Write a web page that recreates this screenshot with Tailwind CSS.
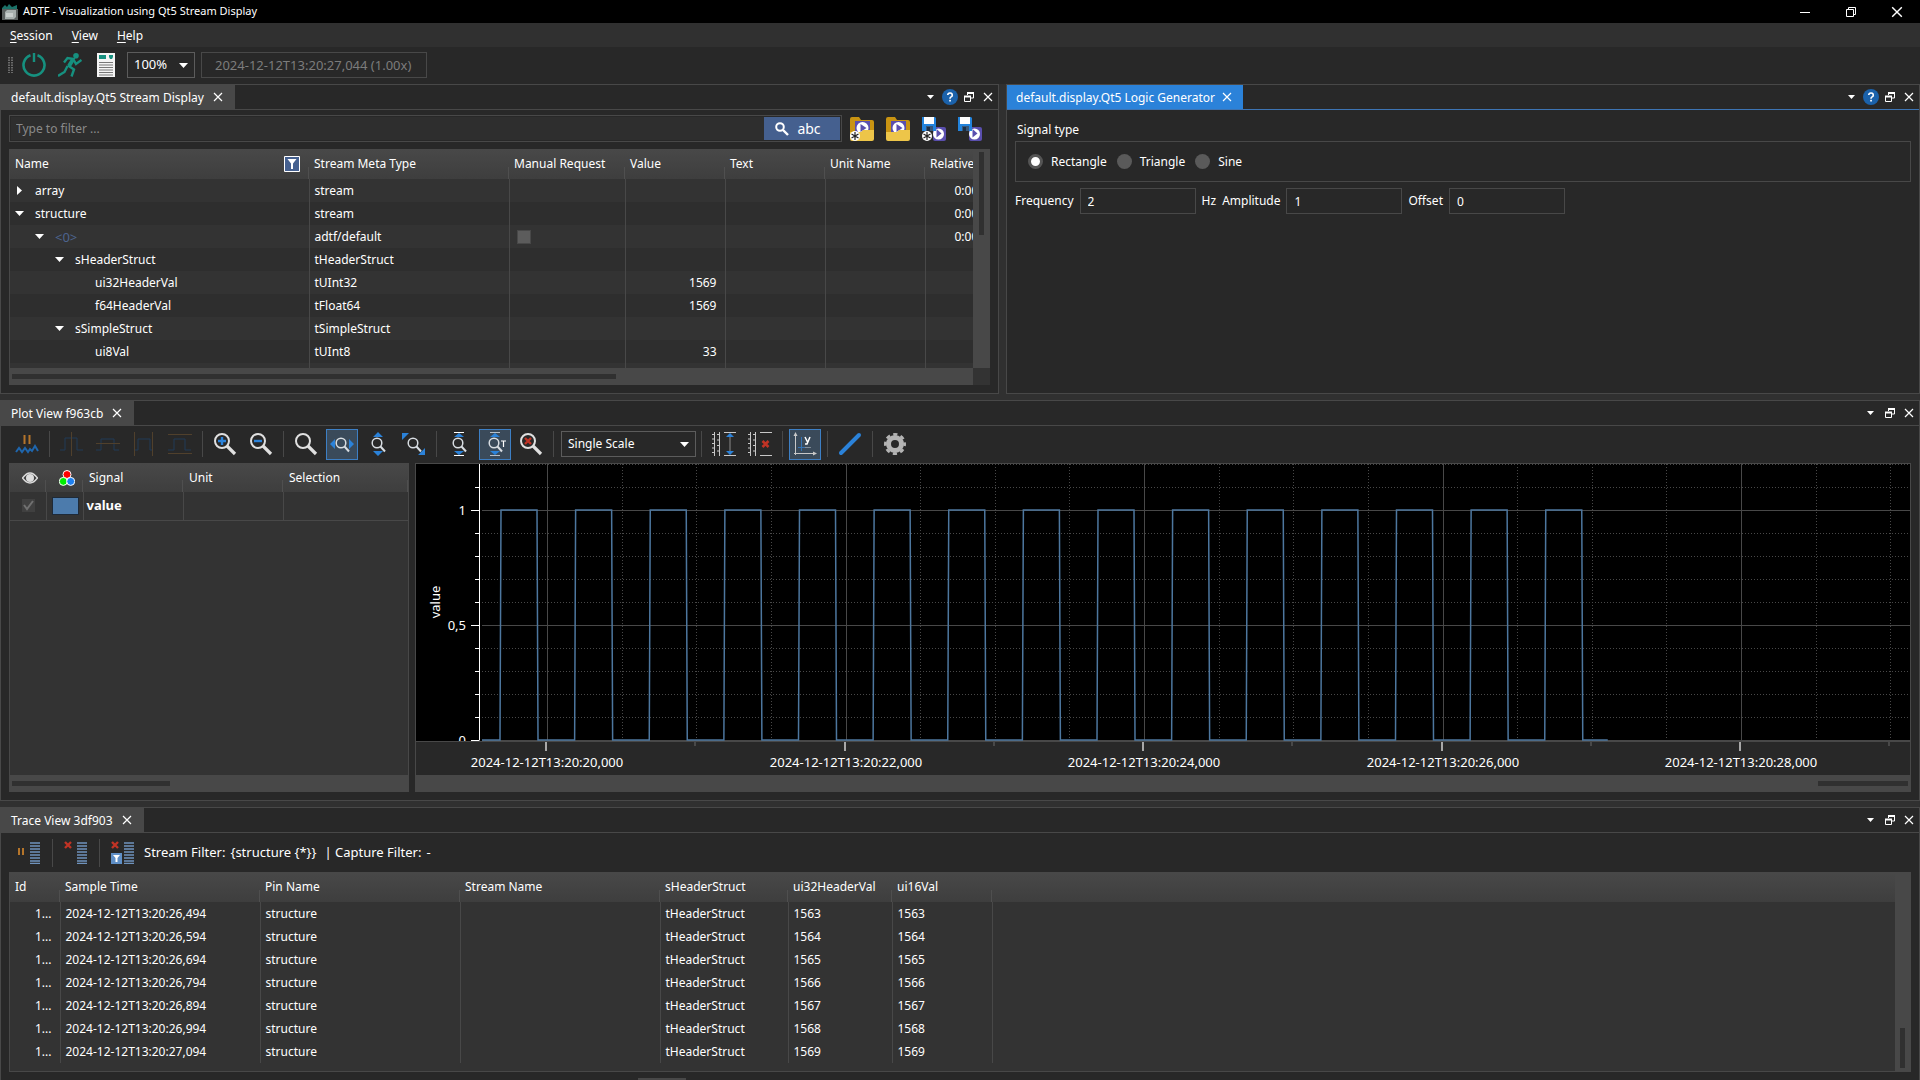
<!DOCTYPE html>
<html lang="en">
<head>
    <meta charset="utf-8"/>
    <meta content="width=device-width, initial-scale=1.0" name="viewport"/>
    <title>ADTF - Visualization using Qt5 Stream Display</title>
    <script src="https://cdn.jsdelivr.net/npm/@tailwindcss/browser@4"></script>
    <style>
        body {
            font-family: 'Noto Sans', 'Open Sans', sans-serif;
        }
    </style>
</head>
<body class="bg-[#303030] text-white text-xs h-screen flex flex-col overflow-hidden">
    <!-- shared icons -->
    <svg class="hidden">
        <symbol id="close" viewBox="0 0 10 10"><path d="M1 1l8 8M9 1l-8 8" stroke="#fff" stroke-width="1.2" fill="none"/></symbol>
        <symbol id="arrow" viewBox="0 0 9 5"><path d="M0 0h9L4.500 5z" fill="#fff"/></symbol>
        <symbol id="float" viewBox="0 0 10 10"><path d="M3.500 3V1h6v5H7" stroke="#fff" fill="none"/><path d="M3 1h7" stroke="#fff" stroke-width="2"/><path d="M.5 4.500h6v5h-6z" stroke="#fff" fill="none"/><path d="M0 4.500h7" stroke="#fff" stroke-width="2"/></symbol>
        <symbol id="help" viewBox="0 0 16 16"><circle cx="8" cy="8" r="8" fill="#1b62ab"/><path d="M5.700 6a2.300 2.100 0 1 1 3.400 1.900C8.200 8.400 8 8.800 8 9.800" stroke="#fff" stroke-width="1.600" fill="none"/><rect x="7.200" y="10.800" width="1.700" height="1.700" fill="#fff"/></symbol>
        <symbol id="lens" viewBox="0 0 24 24"><circle cx="9" cy="9" r="7" stroke="#e0e0e0" stroke-width="2" fill="none"/><path d="M14 14l8 8" stroke="#e0e0e0" stroke-width="3.200"/></symbol>
        <symbol id="lens-sm" viewBox="0 0 24 24"><circle cx="11" cy="11" r="4.800" stroke="#d8dde2" stroke-width="1.500" fill="none"/><path d="M14.500 14.500l4.500 5" stroke="#d8dde2" stroke-width="2"/></symbol>
        <symbol id="rows" viewBox="0 0 10 22"><path d="M0 1h10M0 4h10M0 7h10M0 10h10M0 13h10M0 16h10M0 19h10M0 21.500h10" stroke="#6f93bd" stroke-width="1.300"/></symbol>
        <symbol id="cross" viewBox="0 0 8 8"><path d="M1 1l6 6M7 1l-6 6" stroke="#c03325" stroke-width="2.400"/></symbol>
        <symbol id="floppy" viewBox="0 0 24 24"><rect x="11" y="10" width="13" height="14" rx="2" fill="#5a4fae"/><circle cx="16.500" cy="17" r="5.500" fill="#fff"/><path d="M14.500 12v8.500l5-4z" fill="#5a4fae"/><path d="M0 0h13l1 1v13H0z" fill="#2283dc"/><path d="M2 0h10v7H2z" fill="#fff"/><path d="M4 9h7v5H4z" fill="#37577a"/><path d="M5 10h3v4H5z" fill="#1c2f45"/></symbol>
        <symbol id="folder" viewBox="0 0 24 24"><path d="M2 0h7l2 3h11a2 2 0 0 1 2 2v10H0V2a2 2 0 0 1 2-2z" fill="#c99412"/><rect x="5" y="4" width="15" height="14" fill="#5a4fae"/><circle cx="12.500" cy="11" r="6" fill="#fff"/><path d="M10.500 7v8l6-4z" fill="#5a4fae"/><path d="M0 15h11l2-2h11v9a2 2 0 0 1-2 2H2a2 2 0 0 1-2-2z" fill="#edc549"/></symbol>
        <symbol id="star" viewBox="0 0 24 24"><circle cx="5" cy="19" r="5" fill="#fff"/><path d="M5 15v8M1.500 17l7 4M8.500 17l-7 4" stroke="#222" stroke-width="1.200"/></symbol>
    </svg>

    <header class="bg-black h-[23px] shrink-0 flex items-center justify-between">
        <div class="flex items-center">
            <svg class="w-4 h-4 mx-[2px]" viewBox="0 0 16 16"><path d="M0 4l3-3 2 2 2-3 3 3 5-2v5H0z" fill="#1b7268"/><path d="M0 5h16v11H0z" fill="#5a5f5e"/><path d="M3 8l2-2h9v7l-2 2H3z" fill="#a8b0ae"/><path d="M4 10h7M4 12h7" stroke="#e8ecea"/></svg>
            <h1 class="ml-[3px] text-[11px]">ADTF - Visualization using Qt5 Stream Display</h1>
        </div>
        <div class="flex">
            <button class="w-[46px] h-5 flex items-center justify-center" aria-label="Minimize"><svg class="w-[10px] h-[10px]" viewBox="0 0 10 10"><path d="M0 5.500h10" stroke="#fff"/></svg></button>
            <button class="w-[46px] h-5 flex items-center justify-center" aria-label="Restore"><svg class="w-[10px] h-[10px]" viewBox="0 0 10 10"><path d="M.5 2.500h7v7h-7zM2.500 2V.5h7v7H8" stroke="#fff" fill="none"/></svg></button>
            <button class="w-[46px] h-5 flex items-center justify-center" aria-label="Close"><svg class="w-3 h-3"><use href="#close"/></svg></button>
        </div>
    </header>

    <nav class="h-6 shrink-0 flex items-center gap-[19px] px-[10px] pt-px">
        <a href="#"><span class="underline underline-offset-2">S</span>ession</a>
        <a href="#"><span class="underline underline-offset-2">V</span>iew</a>
        <a href="#"><span class="underline underline-offset-2">H</span>elp</a>
    </nav>

    <div class="h-[37px] shrink-0 bg-[#282828] flex items-center pl-2 pb-[2px]">
        <svg class="w-[5px] h-4" viewBox="0 0 5 16"><path d="M1 0v16M4 0v16" stroke="#6a6a6a" stroke-width="2" stroke-dasharray="1.500 1"/></svg>
        <button class="ml-[9px] w-6" aria-label="Power"><svg class="w-6 h-6" viewBox="0 0 24 24"><path d="M8.500 2.200a10.500 10.500 0 1 0 7 0" stroke="#16907f" stroke-width="2.600" fill="none"/><path d="M12 0v9" stroke="#16907f" stroke-width="2.400"/></svg></button>
        <button class="ml-3 w-6" aria-label="Run"><svg class="w-6 h-6" viewBox="0 0 24 24" fill="none" stroke="#16907f" stroke-width="2.400"><circle cx="18" cy="2.800" r="2.800" fill="#16907f" stroke="none"/><path d="M6 9.500l3.500-4.500 6 1-5 7.500"/><path d="M15 6.500L11 13" stroke-width="4"/><path d="M10 12.500l6 4-2.500 7"/><path d="M9.500 13l-3 6L0 23"/><path d="M15.500 6.500l2.500 4.500 5.500-4"/></svg></button>
        <button class="ml-[15px] w-[18px]" aria-label="Log"><svg class="w-[18px] h-6" viewBox="0 0 18 24"><path d="M0 0h18v24H0z" fill="#f4f4f4"/><path d="M2 2h7v4H2zM12 2h4v2l-1 2h-2l-1-2z" fill="#16907f"/><path d="M2 9.500h14M2 12h14M2 14.500h14M2 17h14M2 19.500h14M2 22h14" stroke="#777"/></svg></button>
        <div class="relative ml-3">
            <select class="appearance-none bg-transparent border border-[#5c5c5c] w-[68px] h-[26px] pl-[6px] text-[13px] text-white" aria-label="Playback speed"><option>100%</option></select>
            <svg class="absolute right-[7px] top-[11px] w-[9px] h-[5px] pointer-events-none"><use href="#arrow"/></svg>
        </div>
        <input class="ml-[6px] w-[226px] h-[26px] border border-[#484848] px-[13px] text-[13px] text-[#7c7c7c]" type="text" value="2024-12-12T13:20:27,044 (1.00x)" aria-label="Session time" readonly>
    </div>

    <main class="flex-1 min-h-0 grid grid-rows-[310fr_401fr_273fr] gap-[6px]">
        <div class="min-h-0 grid grid-cols-[999fr_914fr] gap-[7px]">
            <!-- stream display -->
            <section class="min-w-0 min-h-0 border border-[#484848] bg-[#282828] flex flex-col">
                <div class="h-[25px] shrink-0 border-b border-[#484848] flex justify-between">
                    <div class="bg-[#484848] flex items-center pl-[10px] pr-3 gap-[9px]">
                        <h2 class="pt-px">default.display.Qt5 Stream Display</h2>
                        <button aria-label="Close tab"><svg class="w-[10px] h-[10px]"><use href="#close"/></svg></button>
                    </div>
                    <div class="flex items-center pr-px">
                        <button class="w-[19px] flex justify-center" aria-label="Menu"><svg class="w-[7px] h-1"><use href="#arrow"/></svg></button>
                        <button class="w-[19px] flex justify-center" aria-label="Help"><svg class="w-4 h-4"><use href="#help"/></svg></button>
                        <button class="w-[19px] flex justify-center" aria-label="Float"><svg class="w-[10px] h-[10px]"><use href="#float"/></svg></button>
                        <button class="w-[19px] flex justify-center" aria-label="Close"><svg class="w-[10px] h-[10px]"><use href="#close"/></svg></button>
                    </div>
                </div>
                <div class="flex-1 min-h-0 flex flex-col gap-[7px] px-2 pt-[5px] pb-2">
                    <div class="flex items-center pr-2">
                        <div class="flex-1 flex border border-[#484848] h-[27px] p-px">
                            <input class="flex-1 bg-[#2e2e2e] px-[5px] placeholder:text-[#8a8a8a]" type="text" placeholder="Type to filter ..." aria-label="Filter">
                            <button class="w-[76px] bg-[#45608f] flex items-center justify-center gap-2 pr-2 text-sm">
                                <svg class="w-[14px] h-[14px]" viewBox="0 0 14 14"><circle cx="5" cy="5" r="3.800" stroke="#fff" stroke-width="2" fill="none"/><path d="M8 8l5 5" stroke="#fff" stroke-width="2.400"/></svg>
                                abc
                            </button>
                        </div>
                        <div class="flex gap-3 pl-2">
                            <button aria-label="Open and add"><svg class="w-6 h-6"><use href="#folder"/><use href="#star"/></svg></button>
                            <button aria-label="Open"><svg class="w-6 h-6"><use href="#folder"/></svg></button>
                            <button aria-label="Save all"><svg class="w-6 h-6"><use href="#floppy"/><use href="#star"/></svg></button>
                            <button aria-label="Save"><svg class="w-6 h-6"><use href="#floppy"/></svg></button>
                        </div>
                    </div>
                    <div class="flex-1 min-h-0 flex">
                        <div class="flex-1 min-w-0 flex flex-col">
                            <div class="flex-1 min-h-0 overflow-hidden bg-[#333333] border-t border-l border-[#484848]">
                                <table class="table-fixed w-[1060px]">
                                    <colgroup><col class="w-[299px]"><col class="w-[200px]"><col class="w-[116px]"><col class="w-[100px]"><col class="w-[100px]"><col class="w-[100px]"><col></colgroup>
                                    <thead>
                                        <tr class="h-[29px] bg-linear-to-b from-[#484848] to-[#3e3e3e] text-left [&>th]:font-normal [&>th]:px-[5px] [&>th]:pb-[2px] [&>th]:bg-[linear-gradient(#4f4f4f,#4f4f4f)] [&>th]:bg-[length:1px_12px] [&>th]:bg-right-bottom [&>th]:bg-no-repeat">
                                            <th>
                                                <div class="flex items-center justify-between pr-1">Name
                                                    <button aria-label="Filter names"><svg class="w-4 h-4" viewBox="0 0 16 16"><path d="M.5.5h15v15H.5z" fill="#45608f" stroke="#fff"/><path d="M3.500 3h9L9 7.500V13H7V7.500z" fill="#fff"/></svg></button>
                                                </div>
                                            </th>
                                            <th>Stream Meta Type</th><th>Manual Request</th><th>Value</th><th>Text</th><th>Unit Name</th><th>Relative Time</th>
                                        </tr>
                                    </thead>
                                    <tbody id="streamRows"></tbody>
                                </table>
                            </div>
                            <div class="h-[17px] bg-[#484848] px-[3px] py-[6px]"><div class="h-[5px] w-[63%] bg-[#303030]"></div></div>
                        </div>
                        <div class="w-[17px] flex flex-col">
                            <div class="flex-1 bg-[#484848] px-[6px] py-[3px]"><div class="w-[5px] h-[83px] bg-[#303030]"></div></div>
                            <div class="h-[17px] bg-[#333333]"></div>
                        </div>
                    </div>
                </div>
            </section>

            <!-- logic generator -->
            <section class="min-w-0 min-h-0 border border-[#484848] bg-[#282828]">
                <div class="h-[25px] border-b border-[#3d74b3] flex justify-between">
                    <div class="bg-[#2b82d9] flex items-center pl-[9px] pr-[11px] gap-[7px]">
                        <h2 class="pt-px">default.display.Qt5 Logic Generator</h2>
                        <button aria-label="Close tab"><svg class="w-[10px] h-[10px]"><use href="#close"/></svg></button>
                    </div>
                    <div class="flex items-center pr-px">
                        <button class="w-[19px] flex justify-center" aria-label="Menu"><svg class="w-[7px] h-1"><use href="#arrow"/></svg></button>
                        <button class="w-[19px] flex justify-center" aria-label="Help"><svg class="w-4 h-4"><use href="#help"/></svg></button>
                        <button class="w-[19px] flex justify-center" aria-label="Float"><svg class="w-[10px] h-[10px]"><use href="#float"/></svg></button>
                        <button class="w-[19px] flex justify-center" aria-label="Close"><svg class="w-[10px] h-[10px]"><use href="#close"/></svg></button>
                    </div>
                </div>
                <form class="px-2 pt-3">
                    <p class="pl-[2px] leading-4">Signal type</p>
                    <div class="mt-[3px] h-[41px] border border-[#484848] flex items-center gap-[10px] pl-3">
                        <label class="flex items-center gap-2"><input class="appearance-none w-[15px] h-[15px] rounded-full bg-[#5a5a5a] checked:bg-white checked:border-3 checked:border-[#555555]" type="radio" name="signal" checked>Rectangle</label>
                        <label class="flex items-center gap-2"><input class="appearance-none w-[15px] h-[15px] rounded-full bg-[#5a5a5a] checked:bg-white checked:border-3 checked:border-[#555555]" type="radio" name="signal">Triangle</label>
                        <label class="flex items-center gap-2"><input class="appearance-none w-[15px] h-[15px] rounded-full bg-[#5a5a5a] checked:bg-white checked:border-3 checked:border-[#555555]" type="radio" name="signal">Sine</label>
                    </div>
                    <div class="mt-[6px] flex items-center gap-[6px]">
                        <label for="frequency">Frequency</label>
                        <input class="w-[116px] h-[26px] border border-[#484848] px-[7px]" id="frequency" type="text" value="2">
                        <span>Hz</span>
                        <label for="amplitude">Amplitude</label>
                        <input class="w-[116px] h-[26px] border border-[#484848] px-[7px]" id="amplitude" type="text" value="1">
                        <label for="offset">Offset</label>
                        <input class="w-[116px] h-[26px] border border-[#484848] px-[7px]" id="offset" type="text" value="0">
                    </div>
                </form>
            </section>
        </div>

        <!-- plot view -->
        <section class="min-h-0 border border-[#484848] bg-[#282828] flex flex-col">
            <div class="h-[25px] shrink-0 border-b border-[#484848] flex justify-between">
                <div class="bg-[#484848] flex items-center pl-[10px] pr-3 gap-[9px]">
                    <h2 class="pt-px">Plot View f963cb</h2>
                    <button aria-label="Close tab"><svg class="w-[10px] h-[10px]"><use href="#close"/></svg></button>
                </div>
                <div class="flex items-center pr-px">
                    <button class="w-[19px] flex justify-center" aria-label="Menu"><svg class="w-[7px] h-1"><use href="#arrow"/></svg></button>
                    <button class="w-[19px] flex justify-center" aria-label="Float"><svg class="w-[10px] h-[10px]"><use href="#float"/></svg></button>
                    <button class="w-[19px] flex justify-center" aria-label="Close"><svg class="w-[10px] h-[10px]"><use href="#close"/></svg></button>
                </div>
            </div>
            <div class="h-[37px] shrink-0 flex items-center px-2 pb-px [&>button]:w-9 [&>button]:flex [&>button]:justify-center">
                <button aria-label="Pause"><svg class="w-6 h-6" viewBox="0 0 24 24"><path d="M9.500 3v9M14.500 3v9" stroke="#b5752a" stroke-width="2"/><path d="M1 20l3-4 3 4 3-4 3 4 2-3 2 2 3-5 3 5" stroke="#1f66ad" stroke-width="2" fill="none"/></svg></button>
                <div class="w-[9px] flex justify-center"><div class="w-px h-[26px] bg-[#484848]"></div></div>
                <button aria-label="Vertical cursor" disabled><svg class="w-6 h-6" viewBox="0 0 24 24" fill="none"><path d="M0 18h5V6h12v12h6" stroke="#203a57"/><path d="M11.500 0v24" stroke="#50402c"/></svg></button>
                <button aria-label="Horizontal cursor" disabled><svg class="w-6 h-6" viewBox="0 0 24 24" fill="none"><path d="M0 18h5V7h13v11h5" stroke="#203a57"/><path d="M0 11.500h24" stroke="#50402c"/></svg></button>
                <button aria-label="Vertical range" disabled><svg class="w-6 h-6" viewBox="0 0 24 24" fill="none"><path d="M2 18h4V7h12v11h3" stroke="#203a57"/><path d="M2.500 0v24M20.500 0v24" stroke="#50402c"/></svg></button>
                <button aria-label="Horizontal range" disabled><svg class="w-6 h-6" viewBox="0 0 24 24" fill="none"><path d="M0 18h6V7h11v11h6" stroke="#203a57"/><path d="M0 2.500h24M0 21.500h24" stroke="#50402c"/></svg></button>
                <div class="w-[9px] flex justify-center"><div class="w-px h-[26px] bg-[#484848]"></div></div>
                <button aria-label="Zoom in"><svg class="w-6 h-6" viewBox="0 0 24 24"><use href="#lens"/><path d="M5 9h8M9 5v8" stroke="#2b82d9" stroke-width="2.400"/></svg></button>
                <button aria-label="Zoom out"><svg class="w-6 h-6" viewBox="0 0 24 24"><use href="#lens"/><path d="M5 9h8" stroke="#2b82d9" stroke-width="2.400"/></svg></button>
                <div class="w-[9px] flex justify-center"><div class="w-px h-[26px] bg-[#484848]"></div></div>
                <button aria-label="Zoom"><svg class="w-6 h-6"><use href="#lens"/></svg></button>
                <button class="h-[31px] items-center border border-[#3d7fc4] bg-[#3a4a5a] mx-[2px] max-w-8" aria-label="Fit horizontally"><svg class="w-6 h-6 shrink-0" viewBox="0 0 24 24"><use href="#lens-sm"/><path d="M5 7v10l-5-5zM19 7v10l5-5z" fill="#2b82d9"/></svg></button>
                <button aria-label="Fit vertically"><svg class="w-6 h-6" viewBox="0 0 24 24"><use href="#lens-sm"/><path d="M7 5h10l-5-5zM7 19h10l-5 5z" fill="#2b82d9"/></svg></button>
                <button aria-label="Fit both"><svg class="w-6 h-6" viewBox="0 0 24 24"><use href="#lens-sm"/><path d="M0 1h7L0 8zM23 16v7h-7z" fill="#2b82d9"/></svg></button>
                <div class="w-[9px] flex justify-center"><div class="w-px h-[26px] bg-[#484848]"></div></div>
                <button aria-label="Auto fit"><svg class="w-6 h-6" viewBox="0 0 24 24"><use href="#lens-sm"/><path d="M7 5h10l-5-4zM7 19h10l-5 4z" fill="#2b82d9"/><path d="M7 .5h10M7 23.500h10" stroke="#fff"/></svg></button>
                <button class="h-[31px] items-center border border-[#3d7fc4] bg-[#3a4a5a] mx-[2px] max-w-8" aria-label="Auto fit over time"><svg class="w-6 h-6 shrink-0" viewBox="0 0 24 24"><use href="#lens-sm"/><path d="M7 5h10l-5-4zM7 19h10l-5 4z" fill="#2b82d9"/><path d="M7 .5h10M7 23.500h10" stroke="#b9c0c8"/><path d="M18 9h5M20.500 9v6" stroke="#fff" stroke-width="1.200"/></svg></button>
                <button aria-label="Reset zoom"><svg class="w-6 h-6" viewBox="0 0 24 24"><use href="#lens"/><path d="M6 6l6 6M12 6l-6 6" stroke="#c03325" stroke-width="2.400"/></svg></button>
                <div class="w-[9px] flex justify-center"><div class="w-px h-[26px] bg-[#484848]"></div></div>
                <div class="relative ml-[3px] mr-px">
                    <select class="appearance-none bg-transparent border border-[#5c5c5c] w-[135px] h-[26px] pl-[6px] text-white" aria-label="Scale mode"><option>Single Scale</option></select>
                    <svg class="absolute right-[7px] top-[11px] w-[9px] h-[5px] pointer-events-none"><use href="#arrow"/></svg>
                </div>
                <div class="w-[9px] flex justify-center"><div class="w-px h-[26px] bg-[#484848]"></div></div>
                <button aria-label="Synchronize scales"><svg class="w-6 h-6" viewBox="0 0 24 24" fill="none"><path d="M2.500 0v24M7.500 0v24M0 2.500h2M0 7h2M0 11.500h2M0 16h2M0 20.500h2M5 2.500h2M5 8h2M5 13.500h2M5 19h2M12 .5h12M12 23.500h12" stroke="#c8c8c8"/><path d="M18 4v16" stroke="#8a8a8a"/><path d="M14 5h8l-4-4zM14 19h8l-4 4z" fill="#2b82d9"/></svg></button>
                <button aria-label="Remove scales"><svg class="w-6 h-6" viewBox="0 0 24 24" fill="none"><path d="M2.500 0v24M7.500 0v24M0 2.500h2M0 7h2M0 11.500h2M0 16h2M0 20.500h2M5 2.500h2M5 8h2M5 13.500h2M5 19h2M12 .5h12M12 23.500h12" stroke="#c8c8c8"/><path d="M14.500 9l6 6M20.500 9l-6 6" stroke="#c03325" stroke-width="2.600"/></svg></button>
                <div class="w-[9px] flex justify-center"><div class="w-px h-[26px] bg-[#484848]"></div></div>
                <button class="h-[31px] items-center border border-[#3d7fc4] bg-[#3a4a5a] mx-[2px] max-w-8" aria-label="Show axes"><svg class="w-6 h-6 shrink-0" viewBox="0 0 24 24" fill="none"><path d="M2.500 23V2M1 21.500h20" stroke="#c8c8c8"/><path d="M2.500 0l2 4h-4zM24 21.500l-4-2v4z" fill="#c8c8c8"/><path d="M5 15.500h13" stroke="#7f8b97"/><path d="M8.500 5v14M5 15.500h7" stroke="#3473b5"/><path d="M12 5l2.500 5M17 5l-3 7h-2" stroke="#fff" stroke-width="1.500"/></svg></button>
                <div class="w-[9px] flex justify-center"><div class="w-px h-[26px] bg-[#484848]"></div></div>
                <button aria-label="Line style"><svg class="w-6 h-6" viewBox="0 0 24 24"><path d="M3 21L21 3" stroke="#2b82d9" stroke-width="4" stroke-linecap="round"/></svg></button>
                <div class="w-[9px] flex justify-center"><div class="w-px h-[26px] bg-[#484848]"></div></div>
                <button aria-label="Settings"><svg class="w-6 h-6" viewBox="0 0 24 24" fill="none"><circle cx="12" cy="12" r="6.500" stroke="#b4b4b4" stroke-width="5"/><circle cx="12" cy="12" r="9.700" stroke="#b4b4b4" stroke-width="2.600" stroke-dasharray="4.200 3.420" stroke-dashoffset="2.100"/></svg></button>
            </div>
            <div class="flex-1 min-h-0 flex gap-[6px] px-2 pb-2">
                <div class="w-[400px] shrink-0 flex flex-col">
                    <div class="flex-1 min-h-0 bg-[#333333] border-x border-t border-[#484848]">
                        <table class="table-fixed w-full">
                            <colgroup><col class="w-[36px]"><col class="w-[37px]"><col class="w-[100px]"><col class="w-[100px]"><col></colgroup>
                            <thead>
                                <tr class="h-[28px] bg-linear-to-b from-[#484848] to-[#3e3e3e] text-left [&>th]:font-normal [&>th]:px-[6px] [&>th]:bg-[linear-gradient(#4f4f4f,#4f4f4f)] [&>th]:bg-[length:1px_12px] [&>th]:bg-right-bottom [&>th]:bg-no-repeat">
                                    <th><svg class="w-4 h-4 ml-[6px]" viewBox="0 0 16 16"><path d="M.5 8Q8-2 15.500 8Q8 18 .5 8z" fill="none" stroke="#ddd" stroke-width="1.500"/><circle cx="8" cy="8" r="4" fill="#ddd"/></svg></th>
                                    <th><svg class="w-4 h-4 ml-[7px]" viewBox="0 0 16 16"><circle cx="8" cy="4.500" r="4" fill="#f00" stroke="#fff"/><circle cx="4.300" cy="11.400" r="4" fill="#0e0" stroke="#fff"/><circle cx="11.700" cy="11.400" r="4" fill="#1e80f0" stroke="#fff"/></svg></th>
                                    <th>Signal</th><th>Unit</th><th>Selection</th>
                                </tr>
                            </thead>
                            <tbody>
                                <tr class="h-7 border-b border-[#484848] [&>td]:border-r [&>td]:border-[#484848]">
                                    <td><label class="flex w-[13px] h-[13px] ml-3 bg-[#404040]"><input class="appearance-none" type="checkbox" aria-label="Show value" checked disabled><svg class="w-[13px] h-[13px]" viewBox="0 0 13 13"><path d="M2 6l3 4 6-8" stroke="#707070" stroke-width="2" fill="none"/></svg></label></td>
                                    <td><div class="w-[27px] h-[18px] ml-[5px] bg-[#4c7bac] border border-[#1e2a38]"></div></td>
                                    <td class="px-[3px] text-[13px] font-bold">value</td><td></td><td class="border-r-0!"></td>
                                </tr>
                            </tbody>
                        </table>
                    </div>
                    <div class="h-[17px] bg-[#484848] px-[3px] py-[6px]"><div class="h-[5px] w-[40%] bg-[#303030]"></div></div>
                </div>
                <div class="flex-1 min-w-0 flex flex-col">
                    <div class="flex-1 min-h-0 border-x border-t border-[#484848] overflow-hidden" id="plot"></div>
                    <div class="h-[17px] bg-[#484848] px-[3px] py-[6px]"><div class="h-[5px] w-[90px] ml-auto bg-[#303030]"></div></div>
                </div>
            </div>
        </section>

        <!-- trace view -->
        <section class="relative min-h-0 border border-b-0 border-[#484848] bg-[#282828] flex flex-col">
            <div class="h-[25px] shrink-0 border-b border-[#484848] flex justify-between">
                <div class="bg-[#484848] flex items-center pl-[10px] pr-3 gap-[9px]">
                    <h2 class="pt-px">Trace View 3df903</h2>
                    <button aria-label="Close tab"><svg class="w-[10px] h-[10px]"><use href="#close"/></svg></button>
                </div>
                <div class="flex items-center pr-px">
                    <button class="w-[19px] flex justify-center" aria-label="Menu"><svg class="w-[7px] h-1"><use href="#arrow"/></svg></button>
                    <button class="w-[19px] flex justify-center" aria-label="Float"><svg class="w-[10px] h-[10px]"><use href="#float"/></svg></button>
                    <button class="w-[19px] flex justify-center" aria-label="Close"><svg class="w-[10px] h-[10px]"><use href="#close"/></svg></button>
                </div>
            </div>
            <div class="h-[39px] shrink-0 flex items-center pl-4">
                <button aria-label="Pause trace"><svg class="w-6 h-6" viewBox="0 0 24 24"><path d="M2 7v7M6 7v7" stroke="#b5752a" stroke-width="2"/><use href="#rows" x="13" y="1" width="10" height="22"/></svg></button>
                <div class="w-px h-7 mx-[11px] bg-[#484848]"></div>
                <button aria-label="Clear trace"><svg class="w-6 h-6" viewBox="0 0 24 24"><use href="#cross" x="0" y="0" width="8" height="8"/><use href="#rows" x="13" y="1" width="10" height="22"/></svg></button>
                <div class="w-px h-7 mx-[11px] bg-[#484848]"></div>
                <button aria-label="Clear filters"><svg class="w-6 h-6" viewBox="0 0 24 24"><use href="#cross" x="0" y="0" width="8" height="8"/><path d="M0 12h11v11H0z" fill="#5f8fc6"/><path d="M2 14h7L6.500 17v4h-2v-4z" fill="#fff"/><use href="#rows" x="13" y="1" width="10" height="22"/></svg></button>
                <p class="ml-[9px] flex text-[13px]"><span class="mr-[5px]">Stream Filter:</span><span class="mr-2">{structure {*}}</span><span>| Capture Filter:</span><span class="ml-[5px]">-</span></p>
            </div>
            <div class="flex-1 min-h-0 flex mx-2 mb-2 border-b border-[#484848]">
                <div class="flex-1 min-w-0 overflow-hidden bg-[#333333] border-t border-l border-[#484848]">
                    <table class="table-fixed w-full">
                        <colgroup><col class="w-[50px]"><col class="w-[200px]"><col class="w-[200px]"><col class="w-[200px]"><col class="w-[128px]"><col class="w-[104px]"><col class="w-[100px]"><col></colgroup>
                        <thead>
                            <tr class="h-[29px] bg-linear-to-b from-[#484848] to-[#3e3e3e] text-left [&>th]:font-normal [&>th]:px-[5px] [&>th]:pb-[2px] [&>th]:bg-[linear-gradient(#4f4f4f,#4f4f4f)] [&>th]:bg-[length:1px_12px] [&>th]:bg-right-bottom [&>th]:bg-no-repeat">
                                <th>Id</th><th>Sample Time</th><th>Pin Name</th><th>Stream Name</th><th>sHeaderStruct</th><th>ui32HeaderVal</th><th>ui16Val</th><td></td>
                            </tr>
                        </thead>
                        <tbody id="traceRows"></tbody>
                    </table>
                </div>
                <div class="w-4 bg-[#484848] px-[5px] pb-[3px] flex items-end"><div class="w-[5px] h-10 bg-[#303030]"></div></div>
            </div>
            <div class="absolute bottom-0 left-[637px] w-12 h-[2px] bg-[#484848]"></div>
        </section>
    </main>

    <script>
        // depth, expander, name, type, value, relative time
        const streams = [
            [0, 'closed', 'array', 'stream', '', '0:00:00.0'],
            [0, 'open', 'structure', 'stream', '', '0:00:00.0'],
            [1, 'open', '<0>', 'adtf/default', '', '0:00:00.0'],
            [2, 'open', 'sHeaderStruct', 'tHeaderStruct', '', ''],
            [3, '', 'ui32HeaderVal', 'tUInt32', '1569', ''],
            [3, '', 'f64HeaderVal', 'tFloat64', '1569', ''],
            [2, 'open', 'sSimpleStruct', 'tSimpleStruct', '', ''],
            [3, '', 'ui8Val', 'tUInt8', '33', ''],
            [3, '', '', '', '', '']
        ];
        const arrows = {
            open: '<path d="M0 2h9L4.500 7z" fill="#fff"/>',
            closed: '<path d="M2 0v9l5-4.500z" fill="#fff"/>'
        };

        document.getElementById('streamRows').innerHTML = streams.map(([depth, state, name, type, value, time]) => `
            <tr class="h-[23px] odd:bg-[#333333] even:bg-[#2e2e2e] [&>td]:border-r [&>td]:border-[#484848] [&>td]:px-[5px]">
                <td><div class="flex items-center" style="padding-left:${depth * 20}px">
                    <svg class="w-[9px] h-[9px] mr-[11px]">${arrows[state] || ''}</svg>
                    <span class="${depth === 1 ? 'text-[13px] leading-4 text-[#4d648f]' : ''}">${name.replace('<', '&lt;')}</span>
                </div></td>
                <td>${type}</td>
                <td>${depth === 1 ? '<input class="block appearance-none w-[14px] h-[14px] ml-[2px] bg-[#5c5c5c] border border-[#484848]" type="checkbox" aria-label="Manual request">' : ''}</td>
                <td class="text-right pr-2!">${value}</td>
                <td></td>
                <td></td>
                <td class="whitespace-nowrap pl-[29px]!">${time}</td>
            </tr>`).join('');

        const samples = [
            ['26,494', 1563], ['26,594', 1564], ['26,694', 1565], ['26,794', 1566],
            ['26,894', 1567], ['26,994', 1568], ['27,094', 1569]
        ];
        document.getElementById('traceRows').innerHTML = samples.map(([time, value]) => `
            <tr class="h-[23px] [&>td]:border-r [&>td]:border-[#484848] [&>td]:px-[5px]">
                <td class="text-right pr-2!">1...</td>
                <td>2024-12-12T13:20:${time}</td>
                <td>structure</td>
                <td></td>
                <td>tHeaderStruct</td>
                <td>${value}</td>
                <td>${value}</td>
                <td class="border-r-0!"></td>
            </tr>`).join('');

        function line(x1, y1, x2, y2, color, extra = '') {
            return `<path d="M${x1} ${y1}L${x2} ${y2}" stroke="${color}" ${extra}/>`;
        }

        function drawPlot() {
            const box = document.getElementById('plot');
            const w = box.clientWidth, h = box.clientHeight;
            const bottom = h - 35;          // y of value 0
            const step = bottom / 12;       // 0.1 per step
            const axis = 63, origin = 131, second = 149.25;
            let s = `<rect width="${w}" height="${bottom + 1}" fill="#000"/>`;

            for (let i = 0; i <= 12; i++) {
                const y = Math.round(bottom - i * step) + 0.5;
                const major = i % 5 === 0;
                s += line(axis + 3, y, w, y, '#484848', major ? '' : 'stroke-dasharray="1 2"');
                if (i < 12) s += line(axis - (major ? 8 : 4), y, axis, y, '#fff');
            }
            for (let i = 1, x = origin; x < w; i++) {
                const major = i % 4 === 1;
                s += line(x + 0.5, 0, x + 0.5, bottom, '#484848', major ? '' : 'stroke-dasharray="1 2"');
                if (major) {
                    s += line(x - 1, bottom + 2, x - 1, bottom + 11, '#a8a8a8', 'stroke-width="2"');
                    s += `<text x="${x}" y="${h - 8}" fill="#fff" text-anchor="middle">2024-12-12T13:20:${20 + (i - 1) / 2},000</text>`;
                } else if (i % 4 === 3) {
                    s += line(x - 1, bottom + 2, x - 1, bottom + 6, '#484848', 'stroke-width="2"');
                }
                x = Math.round(origin + i * second / 2);
            }
            s += line(axis + 0.5, 0, axis + 0.5, bottom + 0.5, '#fff');
            s += line(0, bottom + 1.5, w, bottom + 1.5, '#484848');

            const top = Math.round(bottom - 10 * step);
            let d = `M${axis + 3} ${bottom}`;
            for (let i = 0; i < 15; i++) {
                const x = 84 + i * second / 2;
                d += `H${x}L${x + 1} ${top}H${x + 37}L${x + 38} ${bottom}`;
            }
            s += `<path d="${d}h25" fill="none" stroke="#4d779f" stroke-width="1.5"/>`;

            s += `<g fill="#fff" text-anchor="end"><text x="50" y="${top + 5}">1</text><text x="50" y="${Math.round(bottom - 5 * step) + 5}">0,5</text>
                <svg width="60" height="${bottom + 1}"><text x="50" y="${bottom + 5}">0</text></svg></g>`;
            s += `<text transform="translate(24 ${bottom / 2}) rotate(-90)" fill="#fff" text-anchor="middle">value</text>`;
            box.innerHTML = `<svg class="block text-[13px]" width="${w}" height="${h}">${s}</svg>`;
        }

        window.addEventListener('load', drawPlot);
        window.addEventListener('resize', drawPlot);
    </script>
</body>
</html>
